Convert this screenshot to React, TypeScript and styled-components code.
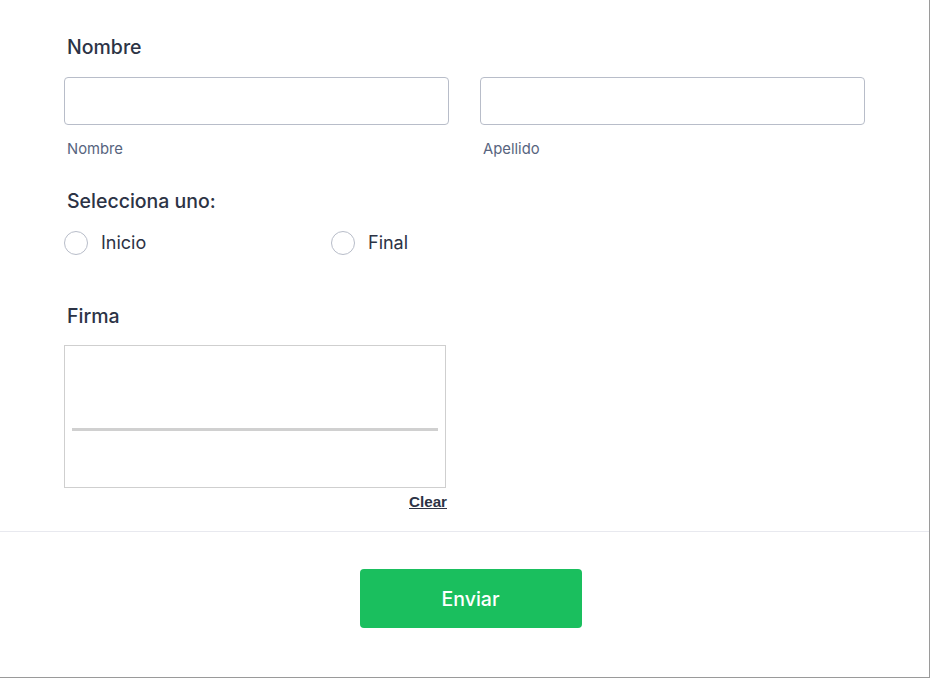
import React from "react";
import styled, { createGlobalStyle } from "styled-components";

const Global = createGlobalStyle`
  html, body { margin: 0; padding: 0; background: #fff; }
  body { font-family: Inter, "Noto Sans", Arial, sans-serif; }
  * { box-sizing: border-box; }
`;

const Page = styled.div`
  width: 930px;
  height: 678px;
  background: #fff;
  border-right: 1px solid #9a9a9a;
  border-bottom: 1px solid #9a9a9a;
  display: flex;
  flex-direction: column;
  overflow: hidden;
`;

const Form = styled.div`
  padding: 36px 64px 0 64px;
  display: flex;
  flex-direction: column;
`;

const Label = styled.div<{ $mt?: number }>`
  font-size: 19.5px;
  line-height: 22px;
  font-weight: 500;
  color: #2c3345;
  padding-left: 3px;
  margin-top: ${(p) => p.$mt ?? 0}px;
`;

const NameGrid = styled.div`
  display: grid;
  grid-template-columns: 385px 385px;
  column-gap: 31px;
  margin-top: 19px;
`;

const Field = styled.div`
  display: flex;
  flex-direction: column;
`;

const Input = styled.input`
  height: 48px;
  width: 100%;
  border: 1px solid #b8bdc9;
  border-radius: 4px;
  background: #fff;
  outline: none;
  font-family: inherit;
  font-size: 15px;
  padding: 0 12px;
`;

const SubLabel = styled.div`
  margin-top: 15px;
  font-size: 14.8px;
  line-height: 18px;
  color: #57647e;
  padding-left: 3px;
`;

const RadioRow = styled.div`
  display: grid;
  grid-template-columns: 267px auto;
  margin-top: 19px;
`;

const RadioOption = styled.label`
  display: flex;
  align-items: center;
  gap: 13px;
  font-size: 18px;
  line-height: 24px;
  color: #2c3345;
`;

const RadioCircle = styled.span`
  width: 24px;
  height: 24px;
  border-radius: 50%;
  border: 1px solid #b8bdc9;
  background: #fff;
  flex: none;
`;

const SignatureWrap = styled.div`
  width: 383px;
  margin-top: 18px;
  display: flex;
  flex-direction: column;
`;

const SignatureBox = styled.div`
  width: 382px;
  height: 143px;
  border: 1px solid #cfcfcf;
  background: #fff;
  padding: 82px 7px 0 7px;
`;

const SignLine = styled.div`
  height: 3px;
  background: #d0d0d0;
`;

const Clear = styled.a`
  align-self: flex-end;
  margin-top: 5px;
  font-family: "Liberation Sans", Arial, sans-serif;
  font-weight: 700;
  font-size: 15.2px;
  line-height: 18px;
  color: #2c3345;
  text-decoration: underline;
  cursor: pointer;
`;

const Divider = styled.div`
  margin-top: 20px;
  height: 1px;
  background: #e8e9ef;
`;

const Footer = styled.div`
  display: flex;
  justify-content: center;
  padding-top: 37px;
`;

const Submit = styled.button`
  width: 222px;
  height: 59px;
  margin-left: 12px;
  border: none;
  border-radius: 4px;
  background: #1abf5e;
  color: #fff;
  font-family: inherit;
  font-size: 19.5px;
  font-weight: 500;
  cursor: pointer;
`;

export default function App() {
  return (
    <>
      <Global />
      <Page>
        <Form>
          <Label>Nombre</Label>
          <NameGrid>
            <Field>
              <Input />
              <SubLabel>Nombre</SubLabel>
            </Field>
            <Field>
              <Input />
              <SubLabel>Apellido</SubLabel>
            </Field>
          </NameGrid>

          <Label $mt={32}>Selecciona uno:</Label>
          <RadioRow>
            <RadioOption>
              <RadioCircle />
              Inicio
            </RadioOption>
            <RadioOption>
              <RadioCircle />
              Final
            </RadioOption>
          </RadioRow>

          <Label $mt={50}>Firma</Label>
          <SignatureWrap>
            <SignatureBox>
              <SignLine />
            </SignatureBox>
            <Clear>Clear</Clear>
          </SignatureWrap>
        </Form>
        <Divider />
        <Footer>
          <Submit>Enviar</Submit>
        </Footer>
      </Page>
    </>
  );
}
